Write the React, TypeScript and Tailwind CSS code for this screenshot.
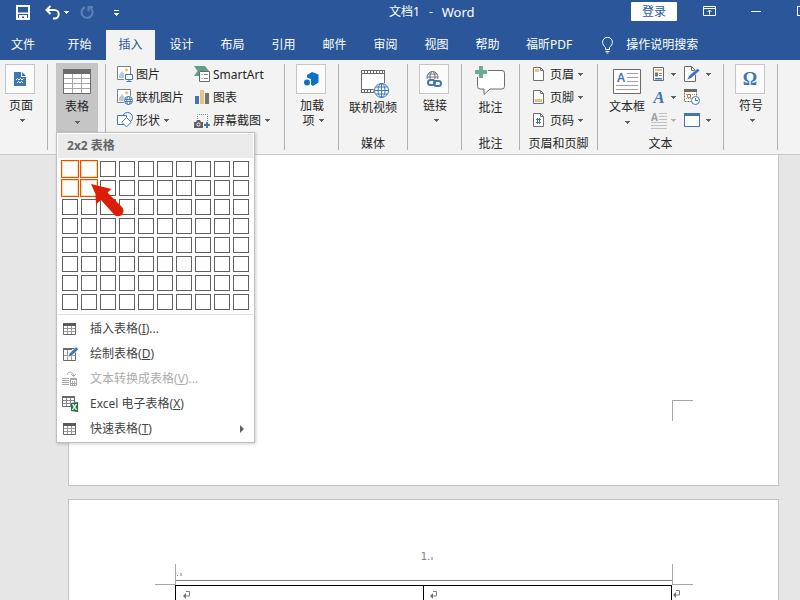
import { useState, type ReactNode } from "react";

const tabs = ["开始", "插入", "设计", "布局", "引用", "邮件", "审阅", "视图", "帮助"];

const ROWS = 8;
const COLS = 10;

function Caret({ light }: { light?: boolean }) {
  return (
    <svg width="5" height="3" viewBox="0 0 5 3" className={light ? "fill-[#b5b5b5]" : "fill-[#606060]"}>
      <path d="M0 0h5v1H0zM1 1h3v1H1zM2 2h1v1H2z" />
    </svg>
  );
}

function Separator() {
  return <div className="mt-px mb-0.5 w-px shrink-0 bg-[#b1b1b1]" />;
}

function Group({ label, className, children }: { label?: string; className: string; children: ReactNode }) {
  return (
    <div className={`flex shrink-0 flex-col ${className}`}>
      <div className="flex-1">{children}</div>
      {label && <div className="text-center whitespace-nowrap">{label}</div>}
    </div>
  );
}

function BoxedButton({ label, second, children }: { label: string; second?: string; children: ReactNode }) {
  return (
    <button className="mx-auto flex flex-col items-center pt-px pr-px">
      <span className="flex h-[30px] w-[30px] items-center justify-center border border-[#c6c6c6] bg-[#fbfbfb]">
        {children}
      </span>
      <span className="mt-1 pl-0.5 leading-[15px]">{label}</span>
      <span className="flex h-[15px] items-center gap-1 pl-1 leading-[15px]">
        {second}
        <Caret />
      </span>
    </button>
  );
}

function SmallButton({ icon, label, caret }: { icon: ReactNode; label: string; caret?: boolean }) {
  return (
    <button className="flex h-[23px] items-center gap-[3px] whitespace-nowrap">
      {icon}
      <span>{label}</span>
      {caret && <span className="pl-px"><Caret /></span>}
    </button>
  );
}

function PictureFrame() {
  return (
    <g>
      <path d="M.5.5h13v13H.5z" fill="#fff" stroke="#7f7f7f" />
      <circle cx="9.5" cy="3.8" r="1.6" fill="#eac282" />
      <path d="M2 12V9l3-4 3 4v3z" fill="#b4c7de" />
    </g>
  );
}

function Globe({ cx, cy, r, color }: { cx: number; cy: number; r: number; color: string }) {
  return (
    <g fill="none" stroke={color}>
      <circle cx={cx} cy={cy} r={r + 1} fill="#f3f3f3" stroke="none" />
      <circle cx={cx} cy={cy} r={r} fill="#fff" />
      <ellipse cx={cx} cy={cy} rx={r / 2} ry={r} />
      <path d={`M${cx - r} ${cy}h${2 * r}M${cx - r * 0.8} ${cy - r / 2}h${1.6 * r}M${cx - r * 0.8} ${cy + r / 2}h${1.6 * r}`} />
      <path d={`M${cx} ${cy - r}v${2 * r}`} />
    </g>
  );
}

function PictureIcon() {
  return (
    <svg width="16" height="17" viewBox="0 0 16 17">
      <PictureFrame />
      <path d="M7 8h9v8H7z" fill="#f3f3f3" />
      <path d="M8.5 8.5h7v5h-7z" fill="#fff" stroke="#3f76b5" />
      <path d="M12 14v2M9.5 15.5h5" stroke="#3f76b5" />
    </svg>
  );
}

function OnlinePictureIcon() {
  return (
    <svg width="16" height="17" viewBox="0 0 16 17">
      <PictureFrame />
      <circle cx="11.5" cy="11.5" r="5" fill="#f3f3f3" />
      <g fill="none" stroke="#3f76b5">
        <circle cx="11.5" cy="11.5" r="4" fill="#fff" />
        <ellipse cx="11.5" cy="11.5" rx="1.8" ry="4" />
        <path d="M8 10.500h7M8 12.500h7" />
      </g>
    </svg>
  );
}

function ShapesIcon() {
  return (
    <svg width="16" height="17" viewBox="0 0 16 17" fill="#fff" stroke="#3f76b5">
      <circle cx="10.5" cy="5.5" r="5" fill="#f3f3f3" />
      <path d="M.5 3.5h9v9h-9z" />
      <path d="M9.5 5.5l4.7 4.7-4.7 4.7-4.7-4.7z" />
    </svg>
  );
}

function SmartArtIcon() {
  return (
    <svg width="16" height="17" viewBox="0 0 16 17">
      <path d="M0 0h11l4 5H5v5H0l3.5-5z" fill="#5f9f8a" />
      <path d="M5.5 5.5h10v10h-10z" fill="#fff" stroke="#6a6a6a" />
      <path d="M7.5 8.5h1M7.5 12.5h1M10 8.5h4M10 12.5h4" stroke="#8a8a8a" />
    </svg>
  );
}

function ChartIcon() {
  return (
    <svg width="16" height="17" viewBox="0 0 16 17">
      <path d="M1 7h4v8H1z" fill="#3f76b5" />
      <path d="M6 1h4v14H6z" fill="#eac282" />
      <path d="M11 4h4v11h-4z" fill="#737373" />
    </svg>
  );
}

function ScreenshotIcon() {
  return (
    <svg width="16" height="17" viewBox="0 0 16 17">
      <path d="M3.5 7V2.5h10V10" fill="none" stroke="#7f7f7f" strokeDasharray="1 1" />
      <path d="M0 10h2l1-2h3l1 2h2v6H0z" fill="#606060" />
      <circle cx="4.5" cy="12.5" r="1.6" fill="none" stroke="#f3f3f3" />
      <path d="M10 13h6M13 10v6" stroke="#3f76b5" strokeWidth="2" />
    </svg>
  );
}

function DocIcon({ kind }: { kind: "header" | "footer" | "number" }) {
  return (
    <svg width="14" height="17" viewBox="0 0 14 17">
      <path d="M.5 1.5h7l3 3v10H.5z" fill="#fff" stroke="#6f6f6f" />
      <path d="M7.5 1.5v3h3" fill="none" stroke="#6f6f6f" />
      {kind === "header" && <path d="M2 3h4v3H2z" fill="#eac282" />}
      {kind === "footer" && <path d="M2 10h7v3H2z" fill="#eac282" />}
      {kind === "number" && (
        <path d="M4.5 6v6M6.500 6v6M3 7.500h5M3 10.500h5" stroke="#3f76b5" />
      )}
    </svg>
  );
}

function TableIcon() {
  return (
    <svg width="28" height="25" viewBox="0 0 28 25">
      <path d="M.5.5h27v24H.5z" fill="#fff" stroke="#6a6a6a" />
      <path d="M0 0h28v5H0z" fill="#6a6a6a" />
      <path d="M9.5 5v19M18.5 5v19M1 9.5h26M1 14.5h26M1 19.5h26" stroke="#a5a5a5" />
    </svg>
  );
}

function GridIcon() {
  return (
    <svg width="14" height="12" viewBox="0 0 14 12">
      <path d="M.5.5h12v11H.5z" fill="#fff" stroke="#6a6a6a" />
      <path d="M0 0h13v3H0z" fill="#5a5a5a" />
      <path d="M4.5 3v8M8.5 3v8M1 5.5h11M1 8.5h11" stroke="#9a9a9a" />
    </svg>
  );
}

function DrawTableIcon() {
  return (
    <svg width="16" height="16" viewBox="0 0 16 16">
      <path d="M.5 2.5h12v12H.5z" fill="#fff" stroke="#6a6a6a" />
      <path d="M0 2h9v2H0z" fill="#6a6a6a" />
      <path d="M4.5 4v10M1 9.5h11M8.5 10v4" stroke="#9a9a9a" />
      <path d="M5 11l1.300-3.500L13 .8l2.500 2.500L8.500 10z" fill="#3f76b5" stroke="#fff" strokeWidth=".6" />
    </svg>
  );
}

function ConvertIcon() {
  return (
    <svg width="16" height="16" viewBox="0 0 16 16" fill="none" stroke="#a5a5a5">
      <path d="M0 7.5h7M0 9.5h7M0 11.5h7M0 13.5h7" />
      <path d="M8.5 7.5h6v7h-6z" />
      <path d="M8 8.5h7M10.5 10v4M12.5 10v4M9 12.5h5" />
      <path d="M5 4C5 0 11.500 0 11.500 5M9 3l2.500 2.500L14 3" />
    </svg>
  );
}

function ExcelIcon() {
  return (
    <svg width="16" height="16" viewBox="0 0 16 16">
      <path d="M.5.5h12v10H.5z" fill="#fff" stroke="#6a6a6a" />
      <path d="M0 0h13v2H0z" fill="#6a6a6a" />
      <path d="M4.500 2v8M8.500 2v8M1 4.500h11M1 7.500h11" stroke="#8a8a8a" />
      <path d="M9 7l7-1v10l-7-1z" fill="#1e7145" />
      <text x="12.500" y="14" textAnchor="middle" fontSize="8" fontWeight="700" fill="#fff">X</text>
    </svg>
  );
}

function MenuItem({ icon, label, hotkey, suffix, disabled, submenu }: {
  icon: ReactNode;
  label: string;
  hotkey: string;
  suffix?: string;
  disabled?: boolean;
  submenu?: boolean;
}) {
  return (
    <li>
      <button
        disabled={disabled}
        className={`flex h-[25px] w-full items-center pl-1 text-left ${disabled ? "text-[#ababab]" : "text-[#444]"}`}
      >
        <span className="flex w-7 items-center">{icon}</span>
        <span className="flex-1">
          {label}(<span className="underline">{hotkey}</span>){suffix}
        </span>
        {submenu && (
          <svg width="4" height="8" viewBox="0 0 4 8" className="mr-[9px]">
            <path d="M0 0l4 4-4 4z" fill="#606060" />
          </svg>
        )}
      </button>
    </li>
  );
}

function TableMenu() {
  const [size, setSize] = useState({ rows: 2, cols: 2 });

  return (
    <div className="absolute top-[69px] left-0 z-10 w-[199px] border border-[#c0c0c0] bg-white p-px shadow-[1px_1px_3px_rgba(0,0,0,0.2)]">
      <div className="h-6 bg-[#ebebeb] pl-[9px] leading-6 font-bold text-[#666]">
        {size.cols}x{size.rows} 表格
      </div>
      <div className="grid grid-cols-10 gap-[3px] px-1 pt-[3px] pb-1">
        {Array.from({ length: ROWS * COLS }).map((_, i) => {
          const row = Math.floor(i / COLS) + 1;
          const col = (i % COLS) + 1;
          const on = row <= size.rows && col <= size.cols;
          return (
            <button
              key={i}
              aria-label={`${col}x${row}`}
              onMouseEnter={() => setSize({ rows: row, cols: col })}
              className={`h-4 border ${on ? "border-[#ffe294] outline outline-[#ef4810]" : "border-[#606060]"}`}
            />
          );
        })}
      </div>
      <ul className="border-t border-[#e1e1e1] pt-px">
        <MenuItem icon={<span className="pl-px"><GridIcon /></span>} label="插入表格" hotkey="I" suffix="..." />
        <MenuItem icon={<span className="pl-px"><DrawTableIcon /></span>} label="绘制表格" hotkey="D" />
        <MenuItem icon={<ConvertIcon />} label="文本转换成表格" hotkey="V" suffix="..." disabled />
        <MenuItem icon={<ExcelIcon />} label="Excel 电子表格" hotkey="X" />
        <MenuItem icon={<span className="pl-px"><GridIcon /></span>} label="快速表格" hotkey="T" submenu />
      </ul>
      <svg width="34" height="35" viewBox="0 0 34 35" className="pointer-events-none absolute top-[50px] left-[33px]">
        <path d="M1 1l20.500 5-4 3.500L31.500 23.500a5 5 0 0 1-7 8.500L11 17l-5 4.500L5.500 11z" fill="#dc1e06" />
      </svg>
    </div>
  );
}

function TitleBar() {
  return (
    <header className="flex h-[30px] shrink-0 items-start text-white">
      <div className="flex w-[389px] shrink-0 items-center pt-[5px] pl-4">
        <button aria-label="保存">
          <svg width="14" height="15" viewBox="0 0 14 15" className="block">
            <path d="M1 1h12v13H1z" fill="none" stroke="#fff" strokeWidth="2" />
            <path d="M2 7.500h10v1.500H2zM3 10h8v4H8v-2.500H6V14H3z" fill="#fff" />
          </svg>
        </button>
        <button aria-label="撤消" className="ml-[15px]">
          <svg width="15" height="15" viewBox="0 0 15 15" fill="none" stroke="#fff" strokeWidth="2" className="block">
            <path d="M5.500 1L1.500 5l4 4M2 5h7.500a4 4 0 0 1 0 8.500H8" />
          </svg>
        </button>
        <button aria-label="撤消列表" className="ml-1">
          <svg width="5" height="3" viewBox="0 0 5 3" className="fill-white"><path d="M0 0h5v1H0zM1 1h3v1H1zM2 2h1v1H2z" /></svg>
        </button>
        <button aria-label="恢复" className="ml-[11px]" disabled>
          <svg width="14" height="15" viewBox="0 0 14 15" fill="none" stroke="#5d80b5" strokeWidth="2" className="block">
            <path d="M5 2.200A5.500 5.500 0 1 0 10.500 3M8.500 6.500V2H13" />
          </svg>
        </button>
        <button aria-label="自定义快速访问工具栏" className="ml-5">
          <svg width="5" height="6" viewBox="0 0 5 6" className="fill-white">
            <path d="M0 0h5v1H0zM0 3h5v1H0zM1 4h3v1H1zM2 5h1v1H2z" />
          </svg>
        </button>
      </div>
      <h1 className="flex items-center gap-[9px] pt-1 whitespace-nowrap">
        <span>文档1</span>
        <span>-</span>
        <span className="text-[13px] leading-4">Word</span>
      </h1>
      <div className="ml-auto flex shrink-0 items-start">
        <button className="mt-0.5 h-[19px] w-[46px] rounded-[1px] bg-white text-[#2b579a]">登录</button>
        <button aria-label="功能区显示选项" className="mt-1.5 ml-[26px]">
          <svg width="13" height="10" viewBox="0 0 13 10" fill="none" stroke="#fff" className="block">
            <path d="M.5.5h12v9H.5zM1 2.500h11M6.500 8.500V4.500M4.500 6l2-2 2 2" />
          </svg>
        </button>
        <button aria-label="最小化" className="mt-[11px] ml-[35px] h-px w-2.5 bg-white" />
        <button aria-label="最大化" className="mt-1.5 ml-9 h-2.5 w-[3px] border border-r-0 border-white" />
      </div>
    </header>
  );
}

function TabBar() {
  return (
    <nav className="flex h-[30px] shrink-0 gap-0.5 text-white">
      <button className="w-[53px] shrink-0 pr-[7px]">文件</button>
      {tabs.map((tab) => (
        <button
          key={tab}
          className={`w-[49px] shrink-0 ${tab === "插入" ? "bg-[#f3f3f3] text-[#2b579a]" : ""}`}
        >
          {tab}
        </button>
      ))}
      <button className="shrink-0 px-3">福昕PDF</button>
      <button className="ml-4 flex shrink-0 items-center gap-[13px]">
        <svg width="11" height="17" viewBox="0 0 11 17" fill="none" stroke="#fff">
          <path d="M3.500 12.500v-2C2 9 .6 7.500.6 5.200a4.900 4.900 0 0 1 9.800 0C10.400 7.500 9 9 7.500 10.500v2zM3.500 14.500h4M4.500 16h2" />
        </svg>
        操作说明搜索
      </button>
    </nav>
  );
}

function Ribbon() {
  return (
    <div className="flex h-[95px] shrink-0 border-b border-[#c8c8c8] bg-[#f3f3f3] pt-[3px] pb-0.5 text-[#262626]">
      <Group className="w-[47px] pr-1.5">
        <BoxedButton label="页面">
          <svg width="12" height="14" viewBox="0 0 12 14">
            <path d="M0 0h7v5h5v9H0z" fill="#3f76b5" />
            <path d="M8 0l4 4H8z" fill="#3f76b5" />
            <path d="M2 8l1.500-1.500L5 8l1.500-1.500L8 8l1.500-1.500M3 11l1.500-1.500L6 11l1.500-1.500L9 11" fill="none" stroke="#fff" />
          </svg>
        </BoxedButton>
      </Group>
      <Separator />
      <div className="relative w-[57px] shrink-0 pl-2">
        <button className="flex h-[69px] w-[42px] flex-col items-center bg-[#c5c5c5] pt-1.5">
          <TableIcon />
          <span className="mt-[5px]">表格</span>
          <span className="flex h-3.5 items-center"><Caret /></span>
        </button>
        <div className="absolute top-0 left-2">
          <TableMenu />
        </div>
      </div>
      <Separator />
      <Group className="w-[178px] pl-[11px]">
        <div className="grid grid-cols-[77px_auto]">
          <SmallButton icon={<PictureIcon />} label="图片" />
          <SmallButton icon={<SmartArtIcon />} label="SmartArt" />
          <SmallButton icon={<OnlinePictureIcon />} label="联机图片" />
          <SmallButton icon={<ChartIcon />} label="图表" />
          <SmallButton icon={<ShapesIcon />} label="形状" caret />
          <SmallButton icon={<ScreenshotIcon />} label="屏幕截图" caret />
        </div>
      </Group>
      <Separator />
      <Group className="w-[53px]">
        <BoxedButton label="加载" second="项">
          <svg width="15" height="15" viewBox="0 0 15 15" fill="#0a70c8">
            <path d="M8 0l6.500 2.500v8L9 14l-2-1.500V7L3 5.500V3z" />
            <circle cx="3" cy="10.500" r="3" />
          </svg>
        </BoxedButton>
      </Group>
      <Separator />
      <Group className="w-[68px]" label="媒体">
        <button className="mx-auto flex flex-col items-center pt-[7px]">
          <svg width="32" height="28" viewBox="-4 0 32 28">
            <path d="M0 0h24v23H0z" fill="#6a6a6a" />
            <path d="M1 4h22v15H1z" fill="#fff" />
            <path d="M1 2h22M1 21h22" stroke="#fff" strokeWidth="2" strokeDasharray="2 1" />
            <Globe cx={20.5} cy={20.5} r={7} color="#3f76b5" />
          </svg>
          <span className="mt-0.5">联机视频</span>
        </button>
      </Group>
      <Separator />
      <Group className="w-[53px]">
        <BoxedButton label="链接">
          <svg width="16" height="18" viewBox="0 0 16 18">
            <g fill="none" stroke="#737373">
              <circle cx="6.500" cy="7" r="5.500" />
              <ellipse cx="6.500" cy="7" rx="2.500" ry="5.500" />
              <path d="M1 7h11M2 4h9" />
            </g>
            <path d="M0 9h16v8H0z" fill="#fbfbfb" />
            <g fill="none" stroke="#3f76b5" strokeWidth="2">
              <rect x="2" y="10" width="7" height="5" rx="2.500" />
              <rect x="8" y="11" width="7" height="5" rx="2.500" />
            </g>
          </svg>
        </BoxedButton>
      </Group>
      <Separator />
      <Group className="w-[57px]" label="批注">
        <button className="mx-auto flex flex-col items-center pt-[3px]">
          <svg width="32" height="29" viewBox="0 0 32 29">
            <path d="M5 4.500h22q2.500 0 2.500 2.500v13.500q0 2.500-2.500 2.500H15l-6 5.500V23H5q-2.500 0-2.500-2.500V7q0-2.500 2.500-2.500z" fill="#fff" stroke="#6f6f6f" />
            <path d="M0 3h13v8H0z" fill="#f3f3f3" />
            <path d="M6 0v12M0 6h12" stroke="#6ea896" strokeWidth="4" />
          </svg>
          <span className="mt-[5px]">批注</span>
        </button>
      </Group>
      <Separator />
      <Group className="w-[77px]" label="页眉和页脚">
        <div className="flex flex-col pl-[13px]">
          <SmallButton icon={<DocIcon kind="header" />} label="页眉" caret />
          <SmallButton icon={<DocIcon kind="footer" />} label="页脚" caret />
          <SmallButton icon={<DocIcon kind="number" />} label="页码" caret />
        </div>
      </Group>
      <Separator />
      <Group className="w-[125px]" label="文本">
        <div className="flex pl-[7px]">
          <button className="flex w-11 flex-col items-center pt-1.5">
            <svg width="28" height="25" viewBox="0 0 28 25">
              <path d="M.5.5h27v24H.5z" fill="#fff" stroke="#6a6a6a" />
              <text x="8" y="13" textAnchor="middle" fontSize="12" fontWeight="600" fill="#3f76b5">A</text>
              <path d="M14 4.500h11M14 8.500h11M14 12.500h11M3 16.500h22M3 20.500h22" stroke="#a0a0a0" />
            </svg>
            <span className="mt-[5px]">文本框</span>
            <span className="flex h-3.5 items-center"><Caret /></span>
          </button>
          <div className="ml-1 flex w-[31px] flex-col">
            <button aria-label="文档部件" className="flex h-[23px] items-center gap-1">
              <svg width="14" height="17" viewBox="0 0 14 17">
                <path d="M.5 1.500h10v13H.5z" fill="#fff" stroke="#6a6a6a" />
                <path d="M2 3h7v2H2z" fill="#eac282" />
                <path d="M2 6.500h3v4H2z" fill="#737373" />
                <path d="M6 7.500h3M6 9.500h3" stroke="#8a8a8a" />
                <path d="M2 12h7v1.500H2z" fill="#3f76b5" />
              </svg>
              <Caret />
            </button>
            <button aria-label="艺术字" className="flex h-[23px] items-center gap-1">
              <svg width="14" height="17" viewBox="0 0 14 17" className="overflow-visible font-['Liberation_Serif',serif]">
                <text x="6" y="14" textAnchor="middle" fontSize="17" fontWeight="700" fontStyle="italic" fill="#3f76b5">A</text>
              </svg>
              <Caret />
            </button>
            <button aria-label="首字下沉" className="flex h-[23px] items-center gap-[3px]" disabled>
              <svg width="15" height="17" viewBox="0 0 15 17" className="overflow-visible">
                <text x="1.500" y="8.500" textAnchor="middle" fontSize="10" fontWeight="700" fill="#a0a0a0">A</text>
                <path d="M6 1.500h8M6 4.500h8M6 7.500h8M-2 10.500h16M-2 13.500h16M-2 16.500h16" stroke="#c0c0c0" />
              </svg>
              <Caret light />
            </button>
          </div>
          <div className="flex flex-col">
            <button aria-label="签名行" className="flex h-[23px] items-center gap-1.5">
              <svg width="16" height="17" viewBox="0 0 16 17">
                <path d="M.5.5h7l4 4v11H.5z" fill="#fff" stroke="#6a6a6a" />
                <path d="M7.500.5v4h4" fill="none" stroke="#6a6a6a" />
                <path d="M3 14l2-4.500L13.500 2.500l2.500 2L7.500 12z" fill="#3f76b5" stroke="#f3f3f3" strokeWidth=".6" />
              </svg>
              <Caret />
            </button>
            <button aria-label="日期和时间" className="flex h-[23px] items-center">
              <svg width="16" height="17" viewBox="0 0 16 17">
                <path d="M.5 1.500h12v11H.5z" fill="#fff" stroke="#6a6a6a" strokeDasharray="2 1" />
                <path d="M0 0h13v3H0z" fill="#6a6a6a" />
                <path d="M2 5.500h9M2 9.500h6" stroke="#a0a0a0" strokeDasharray="1 1" />
                <path d="M3.500 5.500h3v3h-3z" fill="#fff" stroke="#e0702a" />
                <circle cx="11.500" cy="11.500" r="4" fill="#fff" stroke="#3f76b5" />
                <path d="M11.500 9v2.500H14" fill="none" stroke="#3f76b5" />
              </svg>
            </button>
            <button aria-label="对象" className="flex h-[23px] items-center gap-1.5">
              <svg width="16" height="17" viewBox="0 0 16 17">
                <path d="M.5 1.500h15v13H.5z" fill="#fff" stroke="#3f76b5" />
                <path d="M0 1h16v3H0z" fill="#3f76b5" />
              </svg>
              <Caret />
            </button>
          </div>
        </div>
      </Group>
      <Separator />
      <Group className="w-[53px]">
        <BoxedButton label="符号">
          <span className="font-['Liberation_Serif',serif] text-lg font-bold text-[#3f76b5]">Ω</span>
        </BoxedButton>
      </Group>
      <Separator />
    </div>
  );
}

function ReturnMark() {
  return (
    <svg width="7" height="8" viewBox="0 0 7 8" className="block">
      <path d="M3 .5h3.500v4.500H2" fill="none" stroke="#808080" />
      <path d="M0 5l3-3v6z" fill="#707070" />
    </svg>
  );
}

function Document() {
  return (
    <main className="flex min-h-0 flex-1 flex-col gap-[13px] overflow-hidden bg-[#e6e6e6] pr-[21px] pl-[68px]">
      <section className="flex h-[331px] shrink-0 items-end justify-end border border-t-0 border-[#c3c3c3] bg-white pr-[85px] pb-16">
        <div className="h-[21px] w-[21px] border-t border-l border-[#a6a6a6]" />
      </section>
      <section className="h-[331px] shrink-0 border border-[#c3c3c3] bg-white pt-[49px] pr-[85px] pl-[86px]">
        <div className="flex h-[15px] items-center justify-center gap-px pl-1.5 font-['DejaVu_Sans',sans-serif] text-[10px] text-[#808080]">
          1.
          <span className="mt-1 h-[3px] w-0.5 bg-[#c0c0c0]" />
        </div>
        <div className="flex h-[21px]">
          <div className="w-5 border-b border-[#a6a6a6]" />
          <div className="flex flex-1 flex-col border-x border-[#a6a6a6]">
            <div className="flex h-[17px] items-center gap-0.5 border-b border-[#808080] pt-0.5 pl-px">
              <span className="mt-1 h-px w-px bg-[#808080]" />
              <span className="mt-0.5 h-[3px] w-0.5 bg-[#c0c0c0]" />
            </div>
          </div>
          <div className="w-5 border-b border-[#a6a6a6]" />
        </div>
        <div className="flex pl-5">
          <table className="flex-1 table-fixed border-separate border-spacing-0 border-t border-l border-black">
            <tbody>
              {[0, 1].map((row) => (
                <tr key={row} className="h-[19px]">
                  <td className="w-1/2 border-r border-b border-black pl-[7px]"><ReturnMark /></td>
                  <td className="w-1/2 border-r border-b border-black pl-1.5"><ReturnMark /></td>
                </tr>
              ))}
            </tbody>
          </table>
          <div className="w-[21px] pt-[5px] pl-px"><ReturnMark /></div>
        </div>
      </section>
    </main>
  );
}

export default function App() {
  return (
    <div className="flex h-screen flex-col overflow-hidden bg-[#2b579a] font-['Noto_Sans','Noto_Sans_CJK_SC',sans-serif] text-xs">
      <TitleBar />
      <TabBar />
      <Ribbon />
      <Document />
    </div>
  );
}
